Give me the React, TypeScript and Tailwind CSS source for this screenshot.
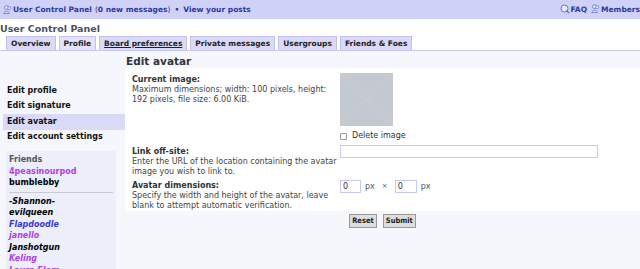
import React from "react";

const friendsOnline = [
  { name: "4peasinourpod", color: "text-[#b040e8]" },
  { name: "bumblebby", color: "text-black" },
];

const friendsOffline = [
  { name: "-Shannon-", color: "text-black" },
  { name: "evilqueen", color: "text-black" },
  { name: "Flapdoodle", color: "text-[#3a3ad0]" },
  { name: "janello", color: "text-[#b040e8]" },
  { name: "Janshotgun", color: "text-black" },
  { name: "Keling", color: "text-[#b040e8]" },
  { name: "Laura Flom", color: "text-[#b040e8]" },
];

const tabs = [
  "Overview",
  "Profile",
  "Board preferences",
  "Private messages",
  "Usergroups",
  "Friends & Foes",
];

function UserIcon() {
  return (
    <svg width="9" height="9" viewBox="0 0 10 10" className="inline-block mr-[1px] -mt-[1px]">
      <circle cx="4" cy="3" r="2.2" fill="#dfe3ff" stroke="#5b6bc0" strokeWidth="0.8" />
      <path d="M0.8 9.5 C1 6.5 7 6.5 7.2 9.5 Z" fill="#dfe3ff" stroke="#5b6bc0" strokeWidth="0.8" />
      <circle cx="7" cy="3.5" r="1.8" fill="#dfe3ff" stroke="#5b6bc0" strokeWidth="0.7" />
    </svg>
  );
}

function FaqIcon() {
  return (
    <svg width="10" height="10" viewBox="0 0 10 10" className="inline-block mr-[1px] -mt-[1px]">
      <circle cx="4.5" cy="4.5" r="3.5" fill="#e6ebff" stroke="#5b6bc0" strokeWidth="0.9" />
      <path d="M6.5 6.5 L9 9" stroke="#5b6bc0" strokeWidth="1.3" />
    </svg>
  );
}

export default function App() {
  return (
    <div className="w-[640px] h-[269px] overflow-hidden bg-white text-[8px] leading-[10px] text-[#333]" style={{ fontFamily: '"DejaVu Sans", Verdana, sans-serif' }}>
      {/* top bar */}
      <div className="h-[19px] bg-[#d0d1f7] flex items-center justify-between pl-[3px] pr-0 font-bold text-[#2a3a9c] text-[7.5px]">
        <div className="flex items-center whitespace-nowrap">
          <UserIcon />
          <span>User Control Panel</span>
          <span className="font-normal text-[#333] ml-[3px]">(</span>
          <span>0 new messages</span>
          <span className="font-normal text-[#333]">)</span>
          <span className="mx-[4px]">•</span>
          <span>View your posts</span>
        </div>
        <div className="flex items-center whitespace-nowrap">
          <FaqIcon />
          <span>FAQ</span>
          <span className="ml-[4px]"><UserIcon /></span>
          <span>Members</span>
        </div>
      </div>

      {/* heading + tabs */}
      <div className="pt-[3px]">
        <h1 className="text-[9.5px] leading-[13px] font-bold text-[#4a5060] whitespace-nowrap">User Control Panel</h1>
        <div className="flex gap-[3px] pl-[6px] mt-[1px] border-b border-[#c6c7f0]">
          {tabs.map((t) => (
            <div
              key={t}
              className={
                "h-[14px] px-[4px] flex items-center font-bold text-[7.5px] whitespace-nowrap border border-b-0 border-[#c0c1ef] " +
                (t === "Profile" ? "bg-[#e3e4fb] text-[#222]" : "bg-[#d9daf7] text-[#222]") +
                (t === "Board preferences" ? " underline" : "")
              }
            >
              {t}
            </div>
          ))}
        </div>
      </div>

      {/* body */}
      <div className="bg-[#f6f7fd] flex h-[220px]">
        {/* left nav */}
        <div className="w-[125px] shrink-0 pt-[32px] pl-[3px]">
          {["Edit profile", "Edit signature", "Edit avatar", "Edit account settings"].map((item) => (
            <div
              key={item}
              className={
                "h-[15.5px] flex items-center pl-[4px] font-bold text-[8px] text-[#111] whitespace-nowrap " +
                (item === "Edit avatar" ? "bg-[#d9daf8]" : "")
              }
            >
              {item}
            </div>
          ))}
          <div className="mt-[6px] ml-[3px] w-[110px] bg-[#eceef9] pt-[3px] pl-[3px] h-[130px] font-bold text-[8px] leading-[11.5px]">
            <div className="text-[#555]">Friends</div>
            {friendsOnline.map((f) => (
              <div key={f.name} className={f.color}>{f.name}</div>
            ))}
            <div className="border-t border-[#c9cbd8] mr-[3px] my-[3px]" />
            {friendsOffline.map((f) => (
              <div key={f.name} className={"italic " + f.color}>{f.name}</div>
            ))}
          </div>
        </div>

        {/* main */}
        <div className="flex-1">
          <h2 className="text-[10.5px] leading-[13px] font-bold text-[#333] mt-[4px] ml-[1px]">Edit avatar</h2>
          <div className="bg-white h-[143px] pl-[7px] pt-[5px]">
            <div className="grid grid-cols-[208px_1fr] leading-[9.5px]">
              <div className="pt-[2px]">
                <div className="font-bold text-[#333] leading-[10px]">Current image:</div>
                <div className="text-[#444] w-[195px]">Maximum dimensions; width: 100 pixels, height: 192 pixels, file size: 6.00 KiB.</div>
              </div>
              <div>
                <div className="w-[53px] h-[53px] bg-[#c4c8d0] relative">
                  <svg width="53" height="53" className="absolute inset-0">
                    <path d="M0 0 L53 53 M53 0 L0 53" stroke="#cdd1d8" strokeWidth="0.7" />
                  </svg>
                </div>
                <div className="flex items-center mt-[5px] gap-[5px] text-[#333] leading-[10px]">
                  <span className="w-[7px] h-[7px] border border-[#999] rounded-[1px] bg-white" />
                  <span>Delete image</span>
                </div>
              </div>

              <div className="mt-[6px]">
                <div className="font-bold text-[#333] leading-[10px]">Link off-site:</div>
                <div className="text-[#444] w-[215px]">Enter the URL of the location containing the avatar image you wish to link to.</div>
              </div>
              <div className="mt-[4px]">
                <div className="w-[258px] h-[13px] border border-[#c6c8f5] bg-white" />
              </div>

              <div className="mt-[5px]">
                <div className="font-bold text-[#333] leading-[10px]">Avatar dimensions:</div>
                <div className="text-[#444] w-[200px]">Specify the width and height of the avatar, leave blank to attempt automatic verification.</div>
              </div>
              <div className="mt-[4px] flex items-start text-[#555]">
                <div className="w-[21px] h-[13px] border border-[#c6c8f5] bg-white pl-[2px] text-[#333] leading-[11px]">0</div>
                <span className="ml-[4px] leading-[13px]">px</span>
                <span className="ml-[7px] text-[7px] leading-[13px]">×</span>
                <div className="ml-[7px] w-[22px] h-[13px] border border-[#c6c8f5] bg-white pl-[2px] text-[#333] leading-[11px]">0</div>
                <span className="ml-[4px] leading-[13px]">px</span>
              </div>
            </div>
          </div>
          <div className="flex justify-center gap-[6px] mt-[3px]">
            <button className="h-[14px] px-[2px] border border-[#999] bg-[#ddd] font-bold text-[7.5px] text-[#222] leading-none" style={{ fontFamily: '"DejaVu Sans Condensed", "DejaVu Sans", sans-serif' }}>Reset</button>
            <button className="h-[14px] px-[2px] border border-[#999] bg-[#ddd] font-bold text-[7.5px] text-[#222] leading-none" style={{ fontFamily: '"DejaVu Sans Condensed", "DejaVu Sans", sans-serif' }}>Submit</button>
          </div>
        </div>
      </div>
    </div>
  );
}
